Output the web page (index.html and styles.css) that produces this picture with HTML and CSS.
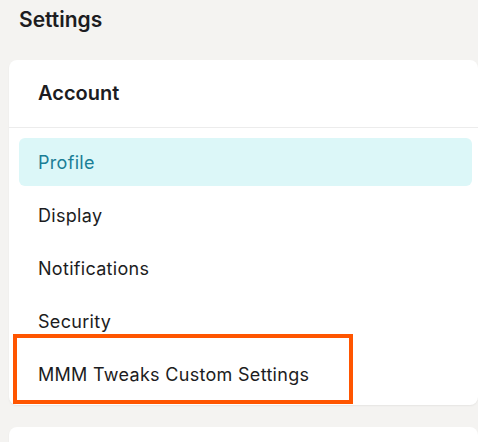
FILE: index.html
```html
<!DOCTYPE html>
<html>
<head>
<meta charset="utf-8">
<link rel="stylesheet" href="styles.css">
</head>
<body>
  <h1 class="page-title">Settings</h1>
  <section class="card">
    <div class="card-header">Account</div>
    <nav class="nav-list">
      <a class="nav-item active">Profile</a>
      <a class="nav-item">Display</a>
      <a class="nav-item">Notifications</a>
      <a class="nav-item">Security</a>
      <a class="nav-item highlighted">MMM Tweaks Custom Settings</a>
    </nav>
  </section>
  <section class="card next-card"></section>
</body>
</html>
```
FILE: styles.css
```css
html, body {
  margin: 0;
  padding: 0;
  background: #f4f3f1;
  font-family: Inter, "Open Sans", "Liberation Sans", sans-serif;
  color: #1c1c21;
  overflow: hidden;
}
.page-title {
  margin: 0;
  padding: 6px 0 0 19px;
  height: 60px;
  box-sizing: border-box;
  font-size: 21px;
  font-weight: 600;
  line-height: 28px;
}
.card {
  margin-left: 9px;
  width: 469px;
  background: #fff;
  border-radius: 8px;
  box-shadow: 0 1px 2px rgba(0,0,0,0.06);
}
.card-header {
  height: 68px;
  box-sizing: border-box;
  padding: 20px 0 0 29px;
  font-size: 20px;
  font-weight: 600;
  line-height: 26px;
  border-bottom: 1px solid #ececec;
}
.nav-list {
  display: flex;
  flex-direction: column;
  gap: 5px;
  padding: 10px 6px 7px 10px;
}
.nav-item {
  position: relative;
  height: 48px;
  display: flex;
  align-items: center;
  padding-left: 19px;
  font-size: 18px;
  letter-spacing: 0.3px;
  border-radius: 6px;
  color: #1c1c21;
}
.nav-item.active {
  background: #dcf7f8;
  color: #1a7e96;
}
.nav-item.highlighted::after {
  content: "";
  position: absolute;
  left: -6px;
  top: -16px;
  width: 340px;
  height: 70px;
  box-sizing: border-box;
  border: 4px solid #ff5500;
}
.next-card {
  margin-top: 22px;
  height: 15px;
  border-radius: 8px 8px 0 0;
}
```
